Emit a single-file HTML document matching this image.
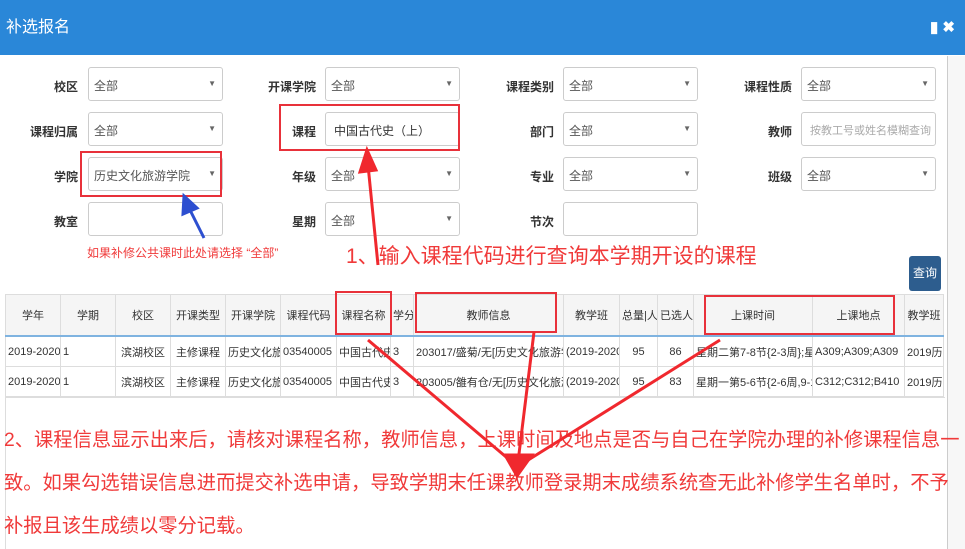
<!DOCTYPE html>
<html><head><meta charset="utf-8"><style>
body{margin:0;width:965px;height:549px;overflow:hidden;background:#fff;font-family:"Liberation Sans","Noto Sans CJK SC",sans-serif;position:relative}
.t{position:absolute;left:0;top:0;width:965px;height:55px;background:#2a87d8;color:#fff;font-size:16px;line-height:55px;padding-left:6px;box-sizing:border-box}
.ab{position:absolute}
.lbl{position:absolute;font-size:12px;color:#333;font-weight:bold;text-align:right;width:70px}
.in{position:absolute;width:135px;height:34px;border:1px solid #ccc;border-radius:3px;box-sizing:border-box;font-size:12px;color:#555;padding:9px 0 0 5px;white-space:nowrap;overflow:hidden}
.in .c{position:absolute;right:6px;top:11px;font-size:8px;color:#666}
.sb{position:absolute;left:947px;top:56px;width:18px;height:493px;background:#f7f7f7;border-left:1px solid #ccc}
table{position:absolute;left:5px;top:294px;border-collapse:collapse;font-size:11px;color:#333;table-layout:fixed}
td{border:1px solid #ddd;height:29px;white-space:nowrap;overflow:hidden;padding:0 2px}
tr.h td{background:#f5f5f5;height:40px;text-align:center;border-bottom:2px solid #7fb3e0}
.r{position:absolute;border:2px solid #e8313a}
.red{position:absolute;color:#f03a3a}
</style></head><body>
<div class="t">补选报名<span style="position:absolute;right:10px;top:0;font-size:15px;font-weight:bold">▮ ✖</span></div>
<div class="sb"></div>

<div class="lbl" style="left:8px;top:78px">校区</div><div class="in" style="left:88px;top:67px">全部<span class="c">▼</span></div>
<div class="lbl" style="left:246px;top:78px">开课学院</div><div class="in" style="left:325px;top:67px">全部<span class="c">▼</span></div>
<div class="lbl" style="left:484px;top:78px">课程类别</div><div class="in" style="left:563px;top:67px">全部<span class="c">▼</span></div>
<div class="lbl" style="left:722px;top:78px">课程性质</div><div class="in" style="left:801px;top:67px">全部<span class="c">▼</span></div>

<div class="lbl" style="left:8px;top:123px">课程归属</div><div class="in" style="left:88px;top:112px">全部<span class="c">▼</span></div>
<div class="lbl" style="left:246px;top:123px">课程</div><div class="in" style="left:325px;top:112px;padding-left:8px;color:#333">中国古代史（上）</div>
<div class="lbl" style="left:484px;top:123px">部门</div><div class="in" style="left:563px;top:112px">全部<span class="c">▼</span></div>
<div class="lbl" style="left:722px;top:123px">教师</div><div class="in" style="left:801px;top:112px;color:#aaa;padding-left:8px;font-size:11px">按教工号或姓名模糊查询</div>

<div class="lbl" style="left:8px;top:168px">学院</div><div class="in" style="left:88px;top:157px">历史文化旅游学院<span class="c">▼</span></div>
<div class="lbl" style="left:246px;top:168px">年级</div><div class="in" style="left:325px;top:157px">全部<span class="c">▼</span></div>
<div class="lbl" style="left:484px;top:168px">专业</div><div class="in" style="left:563px;top:157px">全部<span class="c">▼</span></div>
<div class="lbl" style="left:722px;top:168px">班级</div><div class="in" style="left:801px;top:157px">全部<span class="c">▼</span></div>

<div class="lbl" style="left:8px;top:213px">教室</div><div class="in" style="left:88px;top:202px"></div>
<div class="lbl" style="left:246px;top:213px">星期</div><div class="in" style="left:325px;top:202px">全部<span class="c">▼</span></div>
<div class="lbl" style="left:484px;top:213px">节次</div><div class="in" style="left:563px;top:202px"></div>

<div class="r" style="left:279px;top:104px;width:177px;height:43px"></div>
<div class="r" style="left:80px;top:151px;width:138px;height:42px"></div>

<div class="red" style="left:87px;top:244px;font-size:12px">如果补修公共课时此处请选择 “全部”</div>
<div class="red" style="left:346px;top:240px;font-size:21px">1、输入课程代码进行查询本学期开设的课程</div>
<div class="ab" style="left:909px;top:256px;width:32px;height:35px;background:#2d5d8e;border-radius:3px;color:#fff;font-size:12px;line-height:35px;text-align:center">查询</div>

<div class="ab" style="left:5px;top:294px;width:940px;height:255px;border-left:1px solid #ddd"></div>
<div class="ab" style="left:5px;top:397px;width:940px;border-top:1px solid #ddd"></div>
<table style="width:938px">
<colgroup><col style="width:55px"><col style="width:55px"><col style="width:55px"><col style="width:55px"><col style="width:55px"><col style="width:56px"><col style="width:54px"><col style="width:23px"><col style="width:150px"><col style="width:56px"><col style="width:38px"><col style="width:36px"><col style="width:119px"><col style="width:92px"><col style="width:39px"></colgroup>
<tr class="h"><td>学年</td><td>学期</td><td>校区</td><td>开课类型</td><td>开课学院</td><td>课程代码</td><td>课程名称</td><td>学分</td><td>教师信息</td><td>教学班</td><td>总量|人数</td><td>已选人数</td><td>上课时间</td><td>上课地点</td><td>教学班</td></tr>
<tr><td>2019-2020</td><td>1</td><td style="text-align:center">滨湖校区</td><td style="text-align:center">主修课程</td><td>历史文化旅游</td><td>03540005</td><td>中国古代史（</td><td>3</td><td>203017/盛菊/无[历史文化旅游学院]</td><td>(2019-2020-1</td><td style="text-align:center">95</td><td style="text-align:center">86</td><td>星期二第7-8节{2-3周};星期三</td><td>A309;A309;A309</td><td>2019历史</td></tr>
<tr><td>2019-2020</td><td>1</td><td style="text-align:center">滨湖校区</td><td style="text-align:center">主修课程</td><td>历史文化旅游</td><td>03540005</td><td>中国古代史（</td><td>3</td><td>203005/雒有仓/无[历史文化旅游学院]</td><td>(2019-2020-1</td><td style="text-align:center">95</td><td style="text-align:center">83</td><td>星期一第5-6节{2-6周,9-18周};</td><td>C312;C312;B410</td><td>2019历史</td></tr>
</table>
<div class="r" style="left:335px;top:291px;width:53px;height:40px"></div>
<div class="r" style="left:415px;top:292px;width:138px;height:37px"></div>
<div class="r" style="left:704px;top:295px;width:187px;height:36px"></div>

<div class="red" style="left:4px;top:419px;font-size:19.3px;line-height:43px;white-space:nowrap">2、课程信息显示出来后，请核对课程名称，教师信息，上课时间及地点是否与自己在学院办理的补修课程信息一<br>致。如果勾选错误信息进而提交补选申请，导致学期末任课教师登录期末成绩系统查无此补修学生名单时，不予<br>补报且该生成绩以零分记载。</div>

<svg class="ab" style="left:0;top:0" width="965" height="549">
<g stroke="#f0282e" stroke-width="3" fill="#f0282e">
<line x1="378" y1="265" x2="368" y2="165"/><polygon points="367,150 360,172 376,170"/>
<line x1="368" y1="340" x2="512" y2="462"/>
<line x1="534" y1="332" x2="518" y2="462"/>
<line x1="720" y1="340" x2="525" y2="462"/>
<polygon points="517,476 505,455 532,455"/>
</g>
<g stroke="#2d4fd0" stroke-width="3" fill="#2d4fd0">
<line x1="204" y1="238" x2="190" y2="210"/><polygon points="184,196 183,214 197,208"/>
</g>
</svg>
</body></html>
